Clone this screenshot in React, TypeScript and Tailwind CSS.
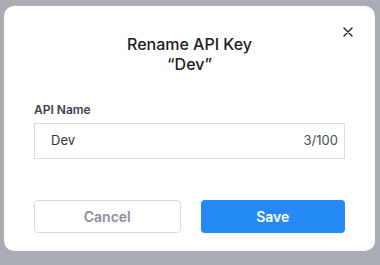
import React from "react";

export default function App() {
  return (
    <div className="h-[265px] w-[380px] bg-[#a9aeb5] pt-[6px] pl-[4px] font-['Inter',sans-serif]">
      <div className="relative flex h-[245px] w-[371px] flex-col rounded-[10px] bg-white px-[30px] pt-[28px]">
        <button className="absolute right-[22px] top-[21px] text-[#1f2328]">
          <svg width="10" height="10" viewBox="0 0 10 10" fill="none" stroke="currentColor" strokeWidth="1.4" strokeLinecap="round">
            <path d="M1 1L9 9M9 1L1 9" />
          </svg>
        </button>
        <h2 className="text-center text-[16px] font-medium leading-[20px] text-[#1d2025]">
          Rename API Key
          <br />
          “Dev”
        </h2>
        <label className="mt-[28px] text-[12px] font-semibold leading-[16px] text-[#3a4150]">API Name</label>
        <div className="mt-[5px] flex h-[36px] items-center justify-between border border-[#d5dce6] pl-[16px] pr-[6px] text-[13px] text-[#33373d]">
          <span>Dev</span>
          <span className="text-[#4b5058]">3/100</span>
        </div>
        <div className="mt-[41px] flex gap-[20px]">
          <button className="h-[33px] flex-1 rounded-[4px] border border-[#d5dce6] text-[14px] font-semibold text-[#8a909b]">
            Cancel
          </button>
          <button className="h-[33px] flex-1 rounded-[4px] bg-[#2589f5] text-[14px] font-semibold text-white">
            Save
          </button>
        </div>
      </div>
    </div>
  );
}
